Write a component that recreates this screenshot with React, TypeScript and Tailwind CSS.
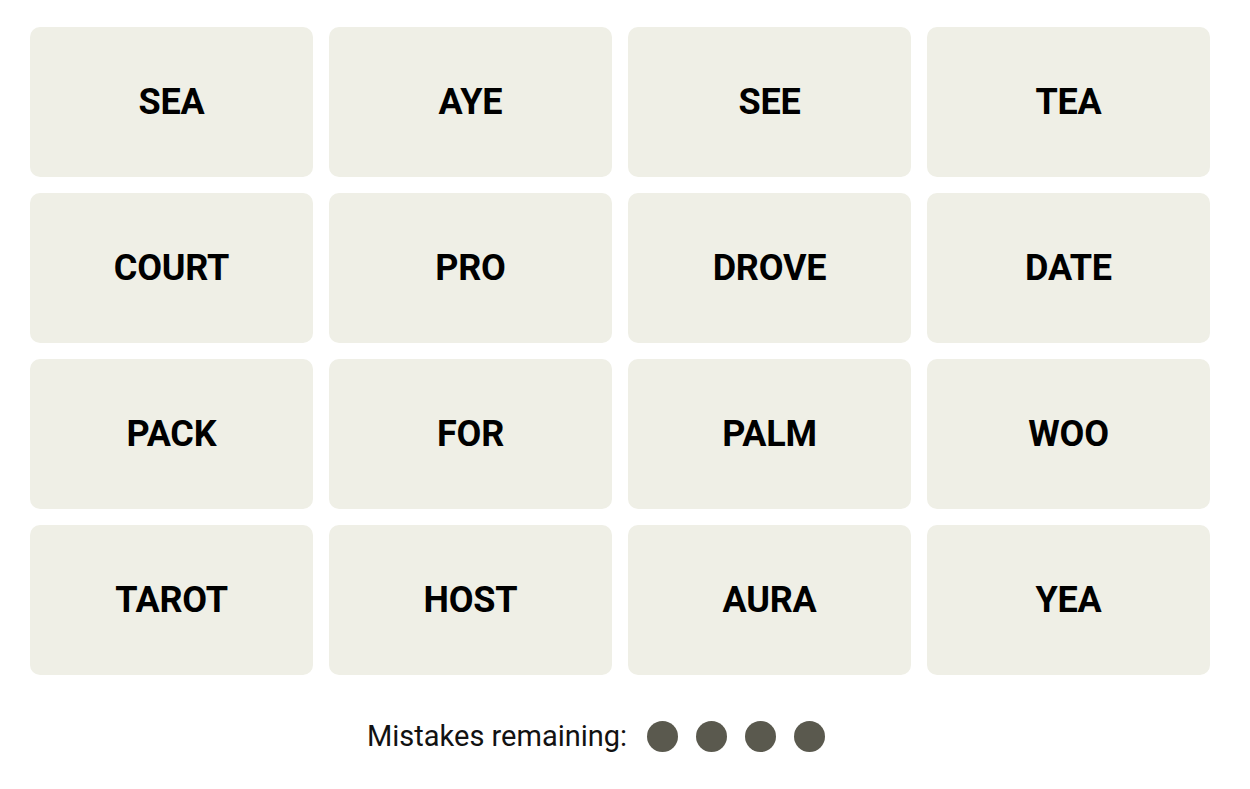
import React from "react";

const words = [
  "SEA", "AYE", "SEE", "TEA",
  "COURT", "PRO", "DROVE", "DATE",
  "PACK", "FOR", "PALM", "WOO",
  "TAROT", "HOST", "AURA", "YEA",
];

export default function App() {
  return (
    <div className="w-[1250px] h-[789px] bg-white" style={{ fontFamily: "Roboto, 'Liberation Sans', sans-serif" }}>
      <div className="pl-[30px] pt-[27px]">
        <div className="grid grid-cols-[repeat(4,283px)] auto-rows-[150px] gap-x-[16px] gap-y-[16px]">
          {words.map((w) => (
            <div key={w} className="bg-[#efefe6] rounded-[10px] flex items-center justify-center">
              <span className="text-[36px] font-bold text-black tracking-[-0.2px]">{w}</span>
            </div>
          ))}
        </div>
      </div>
      <div className="flex items-center pl-[367px] pt-[46px]">
        <span className="text-[29px] text-[#121212] leading-none">Mistakes remaining:</span>
        <div className="flex gap-[18px] ml-[20px]">
          {[0, 1, 2, 3].map((i) => (
            <div key={i} className="w-[31px] h-[31px] rounded-full bg-[#5a594e]" />
          ))}
        </div>
      </div>
    </div>
  );
}
